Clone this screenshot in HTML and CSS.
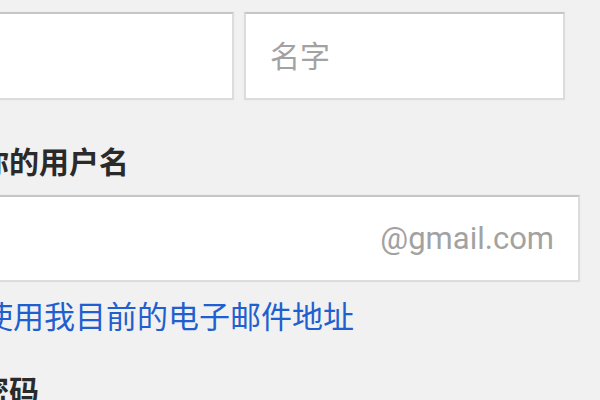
FILE: index.html
```html
<!DOCTYPE html>
<html lang="zh-CN">
<head>
    <meta charset="UTF-8">
    <meta name="viewport" content="width=device-width, initial-scale=1.0">
    <title>创建您的 Google 帐户</title>
    <link rel="stylesheet" href="styles.css">
</head>
<body>

    <form class="signup-form">
        <!-- Name row -->
        <div class="name-row">
            <input type="text" class="field name-field" name="lastname" aria-label="姓氏">
            <input type="text" class="field name-field" name="firstname" placeholder="名字">
        </div>

        <label class="form-label" for="username">你的用户名</label>
        <div class="field username-field">
            <input type="text" id="username" name="username">
            <span class="suffix">@gmail.com</span>
        </div>
        <a href="#" class="alt-link">使用我目前的电子邮件地址</a>

        <label class="form-label password-label" for="password">密码</label>
    </form>

</body>
</html>
```

FILE: styles.css
```css
body {
    margin: 0;
    padding-top: 12px;
    background-color: #f1f1f1;
    font-family: Roboto, "Noto Sans CJK SC", sans-serif;
    overflow: hidden;
    height: 400px;
}
.signup-form {
    margin-left: -21px;
    width: 602px;
}
.name-row {
    display: flex;
    gap: 10px;
    width: 652px;
    margin-left: -66px;
    margin-bottom: 45px;
}
.field {
    box-sizing: border-box;
    height: 88px;
    background-color: #fff;
    border: 2px solid #dcdcdc;
    border-top-color: #c6c6c6;
    box-shadow: 0 0 1px rgba(0, 0, 0, 0.08);
    font-family: Roboto, "Noto Sans CJK SC", sans-serif;
    font-size: 30px;
    color: #222;
}
.name-field {
    flex: 1;
    min-width: 0;
    padding: 0 24px;
}
.name-field::placeholder {
    color: #a2a2a2;
}
.form-label {
    display: block;
    font-size: 30px;
    line-height: 36px;
    font-weight: bold;
    color: #2a2a2a;
}
.username-field {
    display: flex;
    align-items: center;
    height: 87px;
    margin-top: 14px;
    padding: 0 24px 0 0;
    margin-left: -66px;
    width: 667px;
}
.username-field input {
    flex: 1;
    min-width: 0;
    border: none;
    outline: none;
    background: transparent;
    font-size: 30px;
}
.suffix {
    color: #a2a2a2;
    font-size: 31px;
}
.alt-link {
    display: block;
    margin-top: 18px;
    margin-left: 3px;
    font-size: 31px;
    line-height: 36px;
    color: #1f5fcf;
    text-decoration: none;
    white-space: nowrap;
}
.password-label {
    margin-top: 38px;
}
```
